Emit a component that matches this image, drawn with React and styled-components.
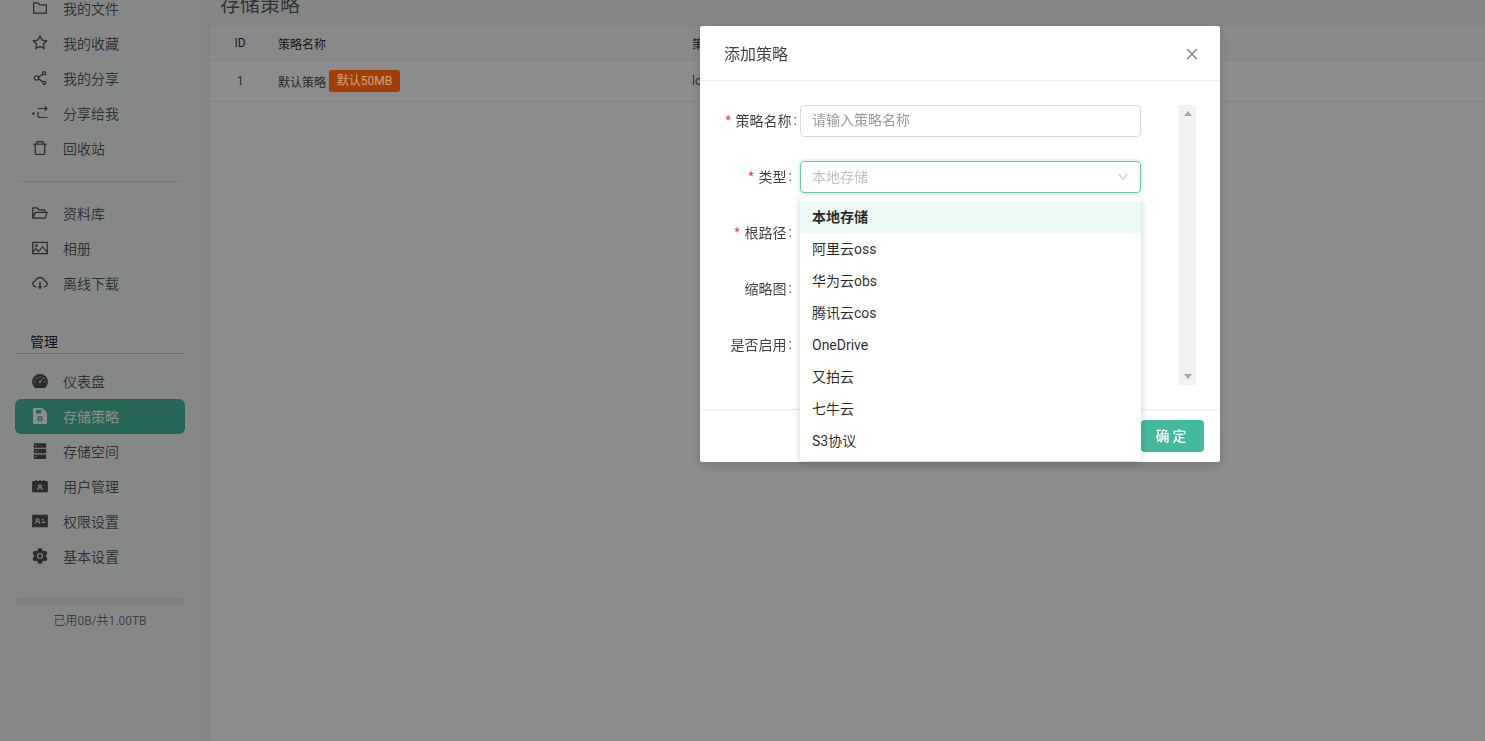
import React from 'react';
import styled, { createGlobalStyle } from 'styled-components';
import {
  AiOutlineFolder,
  AiOutlineStar,
  AiOutlineShareAlt,
  AiOutlineDelete,
  AiOutlineFolderOpen,
  AiOutlinePicture,
  AiOutlineCloudDownload,
  AiFillDashboard,
  AiFillDatabase,
  AiFillContacts,
  AiFillIdcard,
  AiFillSetting,
  AiOutlineClose,
  AiOutlineDown,
} from 'react-icons/ai';

const GlobalStyle = createGlobalStyle`
  html, body {
    margin: 0;
    padding: 0;
    height: 100%;
    overflow: hidden;
    font-family: Roboto, "Noto Sans CJK SC", sans-serif;
    font-size: 14px;
    color: rgba(0, 0, 0, 0.85);
  }
  * {
    box-sizing: border-box;
  }
`;

const Page = styled.div`
  display: flex;
  height: 741px;
  overflow: hidden;
  background: #eff1f4;
`;
const Sider = styled.div`
  width: 200px;
  flex-shrink: 0;
  background: #f5f7f7;
  padding: 0 15px;
`;
const SiderInner = styled.div`
  margin-top: -9px;
  display: flex;
  flex-direction: column;
`;
const NavItem = styled.div`
  height: 35px;
  display: flex;
  align-items: center;
  gap: 14px;
  padding: 0 0 1px 16px;
  border-radius: 6px;
  font-size: 14px;
  color: ${(props) => (props.$active ? '#fff' : 'rgba(0, 0, 0, 0.65)')};
  background: ${(props) => (props.$active ? '#45b99f' : 'transparent')};
  svg {
    width: 18px;
    height: 18px;
    flex-shrink: 0;
    color: ${(props) => (props.$active ? '#fff' : 'rgba(0, 0, 0, 0.68)')};
  }
`;
const NavIcon = styled.svg`
  fill: none;
  stroke: currentColor;
`;
const SiderDivider = styled.div`
  height: 1px;
  background: rgba(0, 0, 0, 0.12);
  margin: 15px 5px 14px;
`;
const GroupTitle = styled.div`
  margin-top: 31px;
  height: 22px;
  padding-left: 15px;
  border-bottom: 1px solid rgba(0, 0, 0, 0.2);
  font-size: 14px;
  line-height: 20px;
  color: rgba(0, 0, 0, 0.9);
  margin-bottom: 10px;
`;
const Usage = styled.div`
  margin-top: 24px;
  height: 8px;
  border-radius: 4px;
  background: #e9e9e9;
`;
const UsageText = styled.div`
  margin-top: 6px;
  text-align: center;
  font-size: 12px;
  line-height: 18px;
  color: rgba(0, 0, 0, 0.55);
`;
const Main = styled.div`
  flex: 1;
  margin-left: 10px;
  min-width: 0;
  background: #fff;
`;
const TitleBar = styled.div`
  height: 26px;
  background: #f2f3f5;
  padding-left: 10px;
  overflow: hidden;
`;
const Title = styled.div`
  margin-top: -9px;
  font-size: 20px;
  line-height: 28px;
  color: rgba(0, 0, 0, 0.65);
`;
const TableRow = styled.div`
  display: grid;
  grid-template-columns: 68px 414px 1fr;
  align-items: center;
  height: ${(props) => (props.$head ? '35px' : '41px')};
  background: ${(props) => (props.$head ? '#fafafa' : '#fff')};
  border-bottom: 1px solid #ebebeb;
  font-size: 12px;
  color: ${(props) => (props.$head ? 'rgba(0, 0, 0, 0.85)' : 'rgba(0, 0, 0, 0.75)')};
`;
const IdCell = styled.div`
  text-align: center;
  padding-right: 8px;
`;
const NameCell = styled.div`
  display: flex;
  align-items: center;
  gap: 3px;
`;
const Tag = styled.span`
  position: relative;
  z-index: 1001;
  height: 22px;
  width: 71px;
  border-radius: 3px;
  background: #a33e06;
  color: #d0a285;
  font-size: 12px;
  line-height: 22px;
  text-align: center;
`;
const Mask = styled.div`
  position: fixed;
  inset: 0;
  z-index: 1000;
  background: rgba(0, 0, 0, 0.45);
`;
const Modal = styled.div`
  position: fixed;
  z-index: 1002;
  top: 26px;
  left: 700px;
  width: 520px;
  background: #fff;
  border-radius: 2px;
  box-shadow: 0 4px 12px rgba(0, 0, 0, 0.15);
`;
const ModalHead = styled.div`
  height: 55px;
  display: flex;
  align-items: center;
  justify-content: space-between;
  padding: 0 20px 0 24px;
  border-bottom: 1px solid #ebebeb;
  font-size: 16px;
  color: rgba(0, 0, 0, 0.75);
  svg {
    width: 16px;
    height: 16px;
    margin-top: 2px;
    color: rgba(0, 0, 0, 0.5);
  }
`;
const ModalBody = styled.div`
  display: flex;
  justify-content: space-between;
  padding: 24px;
`;
const Form = styled.div`
  width: 417px;
  height: 280px;
  display: flex;
  flex-direction: column;
  gap: 24px;
`;
const FormRow = styled.div`
  display: flex;
  height: 32px;
  position: relative;
`;
const Label = styled.div`
  width: 76px;
  flex-shrink: 0;
  display: flex;
  align-items: center;
  justify-content: flex-end;
  padding: 0 ${(props) => (props.$wide ? '3px' : '8px')} 2px 0;
  font-size: 14px;
  color: rgba(0, 0, 0, 0.75);
  white-space: nowrap;
  &::after {
    content: ':';
    margin-left: 2px;
  }
`;
const Required = styled.span`
  color: #f5222d;
  font-size: 12px;
  margin-right: 5px;
`;
const Input = styled.input`
  width: 341px;
  height: 32px;
  padding: 0 11px 2px;
  border: 1px solid #d9d9d9;
  border-radius: 4px;
  font: inherit;
  font-size: 14px;
  outline: none;
  &::placeholder {
    color: #9a9a9a;
  }
`;
const Select = styled.div`
  width: 341px;
  height: 32px;
  padding: 0 11px 2px;
  display: flex;
  align-items: center;
  justify-content: space-between;
  border: 1px solid #6cc7ae;
  border-radius: 4px;
  box-shadow: 0 0 0 2px rgba(69, 185, 159, 0.15);
  font-size: 14px;
  color: #bfbfbf;
  svg {
    width: 12px;
    height: 12px;
    margin: 2px 0 0;
    color: #bfbfbf;
  }
`;
const Dropdown = styled.div`
  position: absolute;
  z-index: 3;
  top: 36px;
  left: 76px;
  width: 341px;
  padding: 4px 0;
  background: #fff;
  border-radius: 2px;
  box-shadow: 0 2px 8px rgba(0, 0, 0, 0.18);
`;
const Option = styled.div`
  height: 32px;
  padding: 5px 12px 0;
  font-size: 14px;
  line-height: 22px;
  font-weight: ${(props) => (props.$active ? 700 : 400)};
  color: rgba(0, 0, 0, 0.85);
  background: ${(props) => (props.$active ? '#ebfaf5' : '#fff')};
`;
const Scrollbar = styled.div`
  width: 17px;
  height: 280px;
  background: #f1f1f1;
  display: flex;
  flex-direction: column;
  justify-content: space-between;
  align-items: center;
  padding: 6px 0;
`;
const Arrow = styled.div`
  width: 0;
  height: 0;
  border-left: 4px solid transparent;
  border-right: 4px solid transparent;
  ${(props) => (props.$down ? 'border-top: 5px solid #a8a8a8;' : 'border-bottom: 5px solid #a8a8a8;')}
`;
const ModalFoot = styled.div`
  height: 53px;
  display: flex;
  align-items: center;
  justify-content: flex-end;
  gap: 8px;
  padding: 0 16px;
  border-top: 1px solid #ebebeb;
`;
const Button = styled.div`
  width: ${(props) => (props.$primary ? '63px' : '65px')};
  height: 32px;
  border-radius: 4px;
  display: flex;
  align-items: center;
  justify-content: center;
  padding-bottom: 2px;
  font-size: 14px;
  font-weight: ${(props) => (props.$primary ? 500 : 400)};
  letter-spacing: ${(props) => (props.$primary ? '3px' : '0')};
  color: ${(props) => (props.$primary ? '#fff' : 'rgba(0, 0, 0, 0.65)')};
  background: ${(props) => (props.$primary ? '#45b99f' : '#fff')};
  border: ${(props) => (props.$primary ? 'none' : '1px solid #d9d9d9')};
`;

const ShareToMe = () => (
  <NavIcon viewBox="0 0 18 18" strokeWidth="1.2">
    <circle cx="2.5" cy="9.5" r="1.2" fill="currentColor" stroke="none" />
    <path d="M7 4.5h9M13.7 2.2 16 4.5l-2.3 2.3M7 8v3.5a2 2 0 0 0 2 2h7.5" />
  </NavIcon>
);
const SaveFill = () => (
  <svg viewBox="-1 -1 18 18" fill="currentColor">
    <path
      fillRule="evenodd"
      d="M2 0h8.5L15 4.5V15a1 1 0 0 1-1 1H2a1 1 0 0 1-1-1V1a1 1 0 0 1 1-1Zm2 2v3.5h5V2H4Zm4 6a2.6 2.6 0 1 0 0 5.2A2.6 2.6 0 0 0 8 8Zm0 1.4a1.2 1.2 0 1 1 0 2.4 1.2 1.2 0 0 1 0-2.4Z"
    />
  </svg>
);

const topItems = [
  [<AiOutlineFolder />, '我的文件'],
  [<AiOutlineStar />, '我的收藏'],
  [<AiOutlineShareAlt />, '我的分享'],
  [<ShareToMe />, '分享给我'],
  [<AiOutlineDelete />, '回收站'],
];
const libItems = [
  [<AiOutlineFolderOpen />, '资料库'],
  [<AiOutlinePicture />, '相册'],
  [<AiOutlineCloudDownload />, '离线下载'],
];
const adminItems = [
  [<AiFillDashboard />, '仪表盘'],
  [<SaveFill />, '存储策略', true],
  [<AiFillDatabase />, '存储空间'],
  [<AiFillContacts />, '用户管理'],
  [<AiFillIdcard />, '权限设置'],
  [<AiFillSetting />, '基本设置'],
];
const options = ['本地存储', '阿里云oss', '华为云obs', '腾讯云cos', 'OneDrive', '又拍云', '七牛云', 'S3协议'];

const renderNav = (arr) => arr.map((item) => (
  <NavItem key={item[1]} $active={item[2]}>
    {item[0]}
    <span>{item[1]}</span>
  </NavItem>
));

const App = () => {
  return (
    <>
      <GlobalStyle />
      <Page>
        <Sider>
          <SiderInner>
            {renderNav(topItems)}
            <SiderDivider />
            {renderNav(libItems)}
            <GroupTitle>管理</GroupTitle>
            {renderNav(adminItems)}
            <Usage />
            <UsageText>已用0B/共1.00TB</UsageText>
          </SiderInner>
        </Sider>
        <Main>
          <TitleBar>
            <Title>存储策略</Title>
          </TitleBar>
          <TableRow $head>
            <IdCell>ID</IdCell>
            <div>策略名称</div>
            <div>策略类型</div>
          </TableRow>
          <TableRow>
            <IdCell>1</IdCell>
            <NameCell>
              默认策略
              <Tag>默认50MB</Tag>
            </NameCell>
            <div>local</div>
          </TableRow>
        </Main>
      </Page>
      <Mask />
      <Modal>
        <ModalHead>
          添加策略
          <AiOutlineClose />
        </ModalHead>
        <ModalBody>
          <Form>
            <FormRow>
              <Label $wide><Required>*</Required>策略名称</Label>
              <Input placeholder="请输入策略名称" />
            </FormRow>
            <FormRow>
              <Label><Required>*</Required>类型</Label>
              <Select>
                本地存储
                <AiOutlineDown />
              </Select>
              <Dropdown>
                {options.map((item, index) => (
                  <Option key={item} $active={index === 0}>{item}</Option>
                ))}
              </Dropdown>
            </FormRow>
            <FormRow>
              <Label><Required>*</Required>根路径</Label>
            </FormRow>
            <FormRow>
              <Label>缩略图</Label>
            </FormRow>
            <FormRow>
              <Label>是否启用</Label>
            </FormRow>
          </Form>
          <Scrollbar>
            <Arrow />
            <Arrow $down />
          </Scrollbar>
        </ModalBody>
        <ModalFoot>
          <Button>取消</Button>
          <Button $primary>确定</Button>
        </ModalFoot>
      </Modal>
    </>
  );
};

export default App;
